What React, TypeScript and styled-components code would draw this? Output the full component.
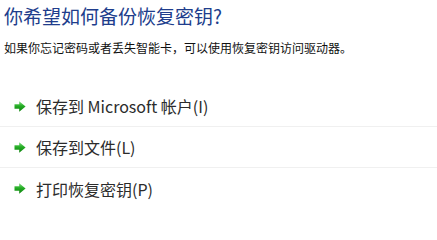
import { FC } from 'react'
import styled, { createGlobalStyle } from 'styled-components'

const GlobalStyle = createGlobalStyle`
  html, body {
    margin: 0;
    padding: 0;
    background: #ffffff;
  }
  body {
    font-family: 'Noto Sans CJK SC', 'Noto Sans', sans-serif;
  }
`

const options = [
  { id: 'account', label: '保存到 Microsoft 帐户(I)' },
  { id: 'file', label: '保存到文件(L)' },
  { id: 'print', label: '打印恢复密钥(P)' }
]

const GreenArrow: FC = () => (
  <svg width="12" height="11" viewBox="0 0 12 11">
    <defs>
      <linearGradient id="arrowFill" x1="0" y1="0" x2="0" y2="1">
        <stop offset="0" stopColor="#7fdc7f" />
        <stop offset="0.45" stopColor="#25ad25" />
        <stop offset="1" stopColor="#0c800c" />
      </linearGradient>
    </defs>
    <path d="M0.5 3.3 L5.2 3.3 L5.2 0.3 L11.6 5.5 L5.2 10.7 L5.2 7.7 L0.5 7.7 Z" fill="url(#arrowFill)" />
  </svg>
)

const App: FC = () => {
  return (
    <Page>
      <GlobalStyle />
      <Title>你希望如何备份恢复密钥?</Title>
      <Description>如果你忘记密码或者丢失智能卡，可以使用恢复密钥访问驱动器。</Description>
      <OptionList>
        {options.map((opt) => (
          <OptionRow key={opt.id}>
            <ArrowIcon>
              <GreenArrow />
            </ArrowIcon>
            <OptionLabel>{opt.label}</OptionLabel>
          </OptionRow>
        ))}
      </OptionList>
    </Page>
  )
}

const Page = styled.div`
  width: 437px;
  height: 204px;
  overflow: hidden;
  display: flex;
  flex-direction: column;
  background: #fff;
`
const Title = styled.div`
  padding: 4px 0 0 4px;
  font-size: 19px;
  line-height: 24px;
  color: #203d8c;
`
const Description = styled.div`
  margin-top: 12px;
  padding-left: 4px;
  font-size: 12px;
  line-height: 16px;
  color: #111;
`
const OptionList = styled.div`
  margin-top: 30px;
  display: flex;
  flex-direction: column;
  flex-shrink: 0;
`
const OptionRow = styled.div`
  display: flex;
  align-items: center;
  flex-shrink: 0;
  height: 41px;
  border-bottom: 1px solid #f0f0f0;
  box-sizing: border-box;
  cursor: pointer;
  &:last-child {
    border-bottom: none;
  }
`
const ArrowIcon = styled.div`
  width: 12px;
  height: 11px;
  margin-left: 14px;
  margin-right: 10px;
  display: flex;
`
const OptionLabel = styled.span`
  font-size: 16px;
  line-height: 20px;
  color: #2b2b2b;
`

export default App
